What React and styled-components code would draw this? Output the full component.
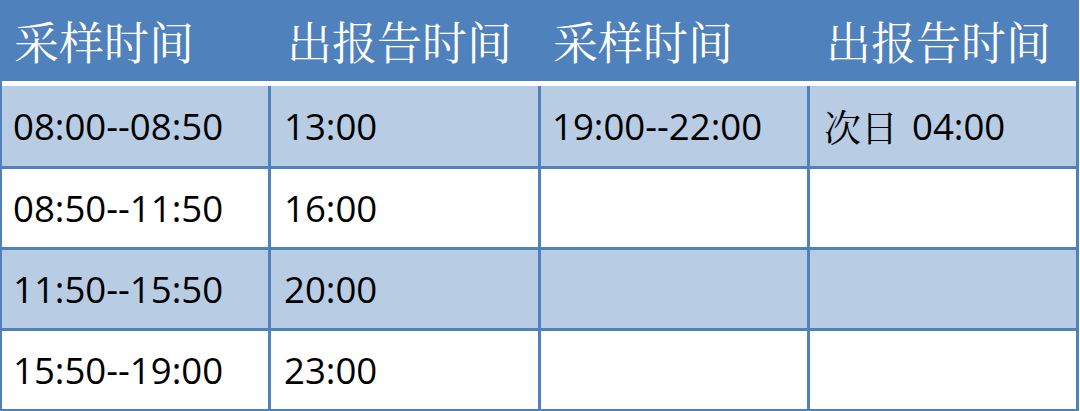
import React from "react";
import styled, { createGlobalStyle } from "styled-components";

const GlobalStyle = createGlobalStyle`
  html, body {
    margin: 0;
    padding: 0;
    background: #ffffff;
  }
`;

const LINE = "#4f81bd";

const Page = styled.div`
  width: 1080px;
  height: 411px;
  background: #ffffff;
  overflow: hidden;
`;

const Frame = styled.div`
  width: 1074px;
  border-left: 2px solid ${LINE};
  border-right: 3px solid ${LINE};
  border-bottom: 2px solid ${LINE};
  background: ${LINE};
`;

const HeaderRow = styled.div`
  display: grid;
  grid-template-columns: 266px 267px 266px 266px;
  column-gap: 3px;
  height: 81px;
  background: #4f81bd;
`;

const HeaderCell = styled.div`
  display: flex;
  align-items: center;
  padding-left: ${(p) => p.$pad}px;
  color: #ffffff;
  font-family: "Noto Serif CJK SC", "Noto Sans CJK SC", serif;
  font-size: 45px;
  line-height: 1;
  white-space: nowrap;
`;

const Band = styled.div`
  height: 5px;
  background: #ffffff;
`;

const Body = styled.div`
  display: grid;
  grid-template-columns: 266px 267px 266px 266px;
  grid-template-rows: 80px 78px 78px 78px;
  gap: 3px;
`;

const Cell = styled.div`
  display: flex;
  align-items: center;
  padding-left: ${(p) => p.$pad}px;
  background: ${(p) => (p.$shade ? "#b8cce4" : "#ffffff")};
  color: #000000;
  font-family: "Open Sans", "Noto Sans CJK SC", sans-serif;
  font-size: 36.6px;
  white-space: nowrap;
`;

const Cjk = styled.span`
  font-family: "Noto Serif CJK SC", "Noto Sans CJK SC", serif;
  font-size: 37px;
  margin-right: 14px;
`;

const headers = ["采样时间", "出报告时间", "采样时间", "出报告时间"];
const headerPads = [12, 16, 12, 16];
const cellPads = [11, 13, 11, 14];

const rows = [
  ["08:00--08:50", "13:00", "19:00--22:00", "次日|04:00"],
  ["08:50--11:50", "16:00", "", ""],
  ["11:50--15:50", "20:00", "", ""],
  ["15:50--19:00", "23:00", "", ""],
];

function renderText(text) {
  if (text.includes("|")) {
    const [cjk, time] = text.split("|");
    return (
      <>
        <Cjk>{cjk}</Cjk>
        {time}
      </>
    );
  }
  return text;
}

export default function App() {
  return (
    <Page>
      <GlobalStyle />
      <Frame>
        <HeaderRow>
          {headers.map((h, i) => (
            <HeaderCell key={i} $pad={headerPads[i]}>
              {h}
            </HeaderCell>
          ))}
        </HeaderRow>
        <Band />
        <Body>
          {rows.map((row, r) =>
            row.map((text, c) => (
              <Cell key={`${r}-${c}`} $shade={r % 2 === 0} $pad={cellPads[c]}>
                {renderText(text)}
              </Cell>
            ))
          )}
        </Body>
      </Frame>
    </Page>
  );
}
